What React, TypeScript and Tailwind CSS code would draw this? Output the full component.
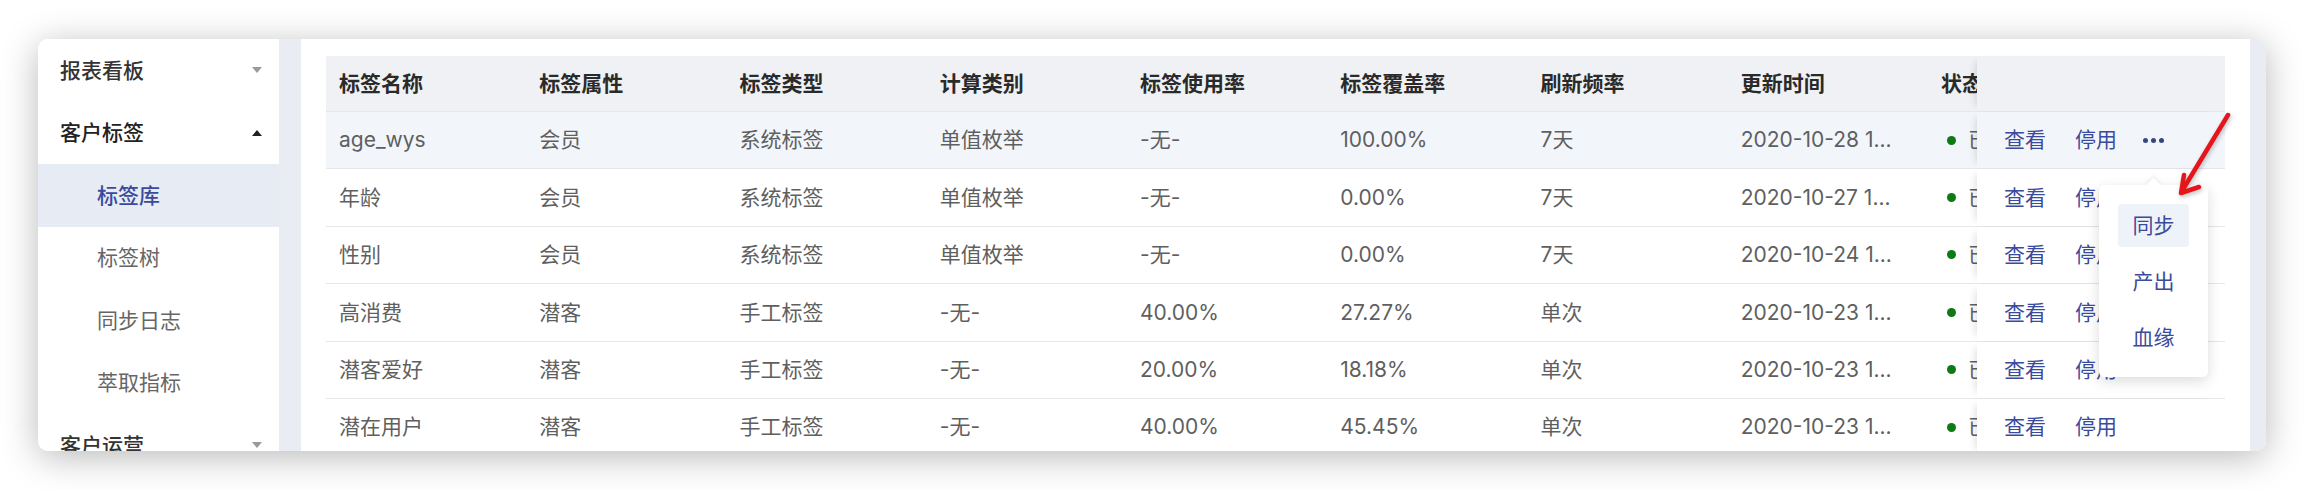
const headers = ["标签名称", "标签属性", "标签类型", "计算类别", "标签使用率", "标签覆盖率", "刷新频率", "更新时间", "状态"];

const rows = [
  ["age_wys", "会员", "系统标签", "单值枚举", "-无-", "100.00%", "7天", "2020-10-28 1..."],
  ["年龄", "会员", "系统标签", "单值枚举", "-无-", "0.00%", "7天", "2020-10-27 1..."],
  ["性别", "会员", "系统标签", "单值枚举", "-无-", "0.00%", "7天", "2020-10-24 1..."],
  ["高消费", "潜客", "手工标签", "-无-", "40.00%", "27.27%", "单次", "2020-10-23 1..."],
  ["潜客爱好", "潜客", "手工标签", "-无-", "20.00%", "18.18%", "单次", "2020-10-23 1..."],
  ["潜在用户", "潜客", "手工标签", "-无-", "40.00%", "45.45%", "单次", "2020-10-23 1..."],
];

function CaretDown() {
  return <span className="w-0 h-0 border-l-[5px] border-r-[5px] border-t-[6px] border-l-transparent border-r-transparent border-t-[#9a9a9a]" />;
}

function CaretUp() {
  return <span className="w-0 h-0 border-l-[5px] border-r-[5px] border-b-[6px] border-l-transparent border-r-transparent border-b-[#222]" />;
}

function Sidebar() {
  const subs = ["标签库", "标签树", "同步日志", "萃取指标"];
  return (
    <div className="w-[241px] shrink-0 bg-white">
      <div className="h-[62.5px] flex items-center justify-between pl-[22px] pr-[17px] text-[#333] font-medium">
        <span>报表看板</span>
        <CaretDown />
      </div>
      <div className="h-[62.5px] flex items-center justify-between pl-[22px] pr-[17px] text-[#222] font-medium">
        <span>客户标签</span>
        <CaretUp />
      </div>
      {subs.map((s, i) => (
        <div
          key={s}
          className={
            i === 0
              ? "h-[62.5px] flex items-center pl-[59px] bg-[#e7ebf4] text-[#3a4b9c] font-medium"
              : "h-[62.5px] flex items-center pl-[59px] text-[#666]"
          }
        >
          {s}
        </div>
      ))}
      <div className="h-[62.5px] flex items-center justify-between pl-[22px] pr-[17px] text-[#333] font-medium">
        <span>客户运营</span>
        <CaretDown />
      </div>
    </div>
  );
}

function Dropdown() {
  return (
    <div className="absolute left-[1773px] top-[129px] w-[109px] h-[192px] bg-white rounded-[5px] shadow-[0_4px_14px_rgba(0,0,0,0.14)] z-20">
      <div className="absolute left-[49px] -top-[5px] w-[11px] h-[11px] rotate-45 bg-white shadow-[-2px_-2px_4px_rgba(0,0,0,0.05)]" />
      <div className="relative flex flex-col px-[19px] pt-[19px] gap-[13px] text-[#3a4b9c] whitespace-nowrap">
        <div className="h-[43px] flex items-center justify-center rounded-[4px] bg-[#eef2f9]">同步</div>
        <div className="h-[43px] flex items-center justify-center">产出</div>
        <div className="h-[43px] flex items-center justify-center">血缘</div>
      </div>
    </div>
  );
}

function Table() {
  return (
    <div className="relative w-[1899px]">
      <div className="flex h-[56px] bg-[#eff1f4] border-b border-[#e5e7ea] text-[#2a2a2a] font-semibold">
        <div className="w-[1651px] overflow-hidden flex items-center">
          {headers.map((h) => (
            <div key={h} className="w-[200.25px] shrink-0 pl-[13px] whitespace-nowrap">
              {h}
            </div>
          ))}
        </div>
        <div className="w-[248px] shrink-0 shadow-[-7px_0_8px_-6px_rgba(0,0,0,0.14)]" />
      </div>
      {rows.map((r, i) => (
        <div
          key={i}
          className={
            i === 0
              ? "flex h-[57.4px] border-b border-[#e5e7ea] bg-[#f2f6fb] text-[#5f5f5f]"
              : "flex h-[57.4px] border-b border-[#e5e7ea] bg-white text-[#5f5f5f]"
          }
        >
          <div className="w-[1651px] overflow-hidden flex items-center">
            {r.map((c, j) => (
              <div key={j} className="w-[200.25px] shrink-0 pl-[13px] whitespace-nowrap">
                {c}
              </div>
            ))}
            <div className="w-[200.25px] shrink-0 pl-[19px] flex items-center whitespace-nowrap">
              <span className="w-[9px] h-[9px] rounded-full bg-[#0d7a14]" />
              <span className="ml-[12px]">已启用</span>
            </div>
          </div>
          <div className="w-[248px] shrink-0 flex items-center pl-[27px] text-[#3a4b9c] shadow-[-7px_0_8px_-6px_rgba(0,0,0,0.14)]">
            <span>查看</span>
            <span className="ml-[29px]">停用</span>
            {i === 0 && (
              <span className="ml-[26px] flex gap-[3px]">
                <span className="w-[5px] h-[5px] rounded-full bg-[#36477f]" />
                <span className="w-[5px] h-[5px] rounded-full bg-[#36477f]" />
                <span className="w-[5px] h-[5px] rounded-full bg-[#36477f]" />
              </span>
            )}
          </div>
        </div>
      ))}
      <Dropdown />
    </div>
  );
}

export default function App() {
  return (
    <div className="relative w-[2304px] h-[490px] bg-white pt-[39px] pl-[38px] text-[21px] font-['Inter','Noto_Sans_CJK_SC',sans-serif]">
      <div className="w-[2228px] h-[412px] flex rounded-[10px] overflow-hidden bg-white shadow-[0_6px_36px_rgba(0,0,0,0.28)]">
        <Sidebar />
        <div className="w-[22px] shrink-0 bg-[#e9ecf3]" />
        <div className="flex-1 pl-[25px] pt-[17px] bg-white">
          <Table />
        </div>
        <div className="w-[16px] shrink-0 bg-[#e9ecf3]" />
      </div>

      {/* red annotation arrow */}
      <svg
        className="absolute left-[2170px] top-[105px] z-30 drop-shadow-[1px_2px_2px_rgba(0,0,0,0.25)]"
        width="70"
        height="100"
        viewBox="0 0 70 100"
        fill="none"
      >
        <path d="M58 10 L12 86" stroke="#e5161b" strokeWidth="4.5" strokeLinecap="round" />
        <path d="M14 70 L11 88 L29 82" stroke="#e5161b" strokeWidth="4.5" strokeLinecap="round" strokeLinejoin="round" />
      </svg>
    </div>
  );
}
